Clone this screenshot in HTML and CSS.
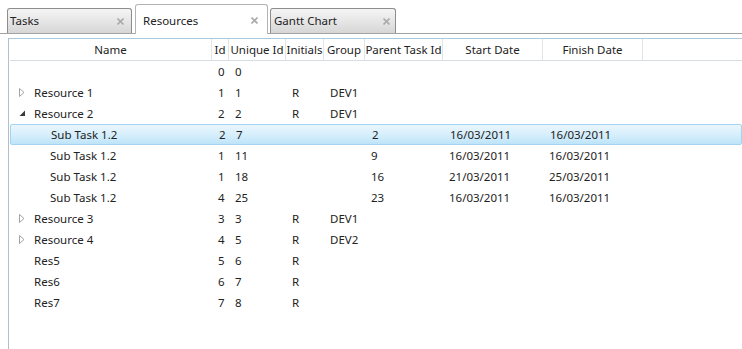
FILE: index.html
```html
<!DOCTYPE html>
<html lang="en">
<head>
  <meta charset="UTF-8">
  <title>Resources</title>
  <link rel="stylesheet" href="styles.css">
</head>
<body>
  <div class="tabs">
    <div class="tab">
      <span class="tab-title">Tasks</span>
      <svg class="close" width="7" height="7" viewBox="0 0 7 7"><path d="M0.5 0.5L6.5 6.5M6.5 0.5L0.5 6.5"/></svg>
    </div>
    <div class="tab active">
      <span class="tab-title">Resources</span>
      <svg class="close" width="7" height="7" viewBox="0 0 7 7"><path d="M0.5 0.5L6.5 6.5M6.5 0.5L0.5 6.5"/></svg>
    </div>
    <div class="tab gantt">
      <span class="tab-title">Gantt Chart</span>
      <svg class="close" width="7" height="7" viewBox="0 0 7 7"><path d="M0.5 0.5L6.5 6.5M6.5 0.5L0.5 6.5"/></svg>
    </div>
  </div>

  <div class="content">
    <div class="panel">
      <div class="row header">
        <div class="hcell">Name</div>
        <div class="hcell">Id</div>
        <div class="hcell">Unique Id</div>
        <div class="hcell">Initials</div>
        <div class="hcell">Group</div>
        <div class="hcell">Parent Task Id</div>
        <div class="hcell">Start Date</div>
        <div class="hcell">Finish Date</div>
        <div class="hcell filler"></div>
      </div>

      <div class="row">
        <div class="name"></div>
        <div class="cell">0</div><div class="cell">0</div><div class="cell"></div><div class="cell"></div>
        <div class="cell"></div><div class="cell"></div><div class="cell"></div>
      </div>
      <div class="row">
        <div class="name"><svg class="expander" width="6" height="9" viewBox="0 0 6 9"><path class="closed" d="M0.5 0.5L5 4.5L0.5 8.5Z"/></svg>Resource 1</div>
        <div class="cell">1</div><div class="cell">1</div><div class="cell">R</div><div class="cell">DEV1</div>
        <div class="cell"></div><div class="cell"></div><div class="cell"></div>
      </div>
      <div class="row">
        <div class="name"><svg class="expander" width="6" height="9" viewBox="0 0 6 9"><path class="open" d="M6 1.5L6 7L0.5 7Z"/></svg>Resource 2</div>
        <div class="cell">2</div><div class="cell">2</div><div class="cell">R</div><div class="cell">DEV1</div>
        <div class="cell"></div><div class="cell"></div><div class="cell"></div>
      </div>
      <div class="row selected">
        <div class="name child">Sub Task 1.2</div>
        <div class="cell">2</div><div class="cell">7</div><div class="cell"></div><div class="cell"></div>
        <div class="cell">2</div><div class="cell">16/03/2011</div><div class="cell">16/03/2011</div>
      </div>
      <div class="row">
        <div class="name child">Sub Task 1.2</div>
        <div class="cell">1</div><div class="cell">11</div><div class="cell"></div><div class="cell"></div>
        <div class="cell">9</div><div class="cell">16/03/2011</div><div class="cell">16/03/2011</div>
      </div>
      <div class="row">
        <div class="name child">Sub Task 1.2</div>
        <div class="cell">1</div><div class="cell">18</div><div class="cell"></div><div class="cell"></div>
        <div class="cell">16</div><div class="cell">21/03/2011</div><div class="cell">25/03/2011</div>
      </div>
      <div class="row">
        <div class="name child">Sub Task 1.2</div>
        <div class="cell">4</div><div class="cell">25</div><div class="cell"></div><div class="cell"></div>
        <div class="cell">23</div><div class="cell">16/03/2011</div><div class="cell">16/03/2011</div>
      </div>
      <div class="row">
        <div class="name"><svg class="expander" width="6" height="9" viewBox="0 0 6 9"><path class="closed" d="M0.5 0.5L5 4.5L0.5 8.5Z"/></svg>Resource 3</div>
        <div class="cell">3</div><div class="cell">3</div><div class="cell">R</div><div class="cell">DEV1</div>
        <div class="cell"></div><div class="cell"></div><div class="cell"></div>
      </div>
      <div class="row">
        <div class="name"><svg class="expander" width="6" height="9" viewBox="0 0 6 9"><path class="closed" d="M0.5 0.5L5 4.5L0.5 8.5Z"/></svg>Resource 4</div>
        <div class="cell">4</div><div class="cell">5</div><div class="cell">R</div><div class="cell">DEV2</div>
        <div class="cell"></div><div class="cell"></div><div class="cell"></div>
      </div>
      <div class="row">
        <div class="name leaf">Res5</div>
        <div class="cell">5</div><div class="cell">6</div><div class="cell">R</div><div class="cell"></div>
        <div class="cell"></div><div class="cell"></div><div class="cell"></div>
      </div>
      <div class="row">
        <div class="name leaf">Res6</div>
        <div class="cell">6</div><div class="cell">7</div><div class="cell">R</div><div class="cell"></div>
        <div class="cell"></div><div class="cell"></div><div class="cell"></div>
      </div>
      <div class="row">
        <div class="name leaf">Res7</div>
        <div class="cell">7</div><div class="cell">8</div><div class="cell">R</div><div class="cell"></div>
        <div class="cell"></div><div class="cell"></div><div class="cell"></div>
      </div>
    </div>
  </div>
</body>
</html>
```

FILE: styles.css
```css
body {
  margin: 0;
  height: 100vh;
  display: flex;
  flex-direction: column;
  overflow: hidden;
  font-family: "Noto Sans", "Open Sans", sans-serif;
  font-size: 11.5px;
  color: #222;
  background-color: #fff;
}

/* tab strip */
.tabs {
  display: flex;
  align-items: flex-end;
  height: 33px;
  padding-left: 7px;
  border-bottom: 1px solid #a3a3a3;
}
.tab {
  box-sizing: border-box;
  display: flex;
  align-items: center;
  width: 125px;
  height: 25px;
  padding: 0 7px 0 2px;
  border: 1px solid #8d8d8d;
  border-bottom: none;
  border-radius: 3px 3px 0 0;
  background: linear-gradient(#f5f5f5, #e6e6e6 50%, #d6d6d6);
}
.tab-title {
  flex: 1;
  padding-bottom: 1px;
}
.tab.active {
  width: 133px;
  height: 30px;
  margin-left: 3px;
  margin-bottom: -1px;
  padding: 2px 9px 0 7px;
  border-color: #b3b3b3;
  background: #fff;
}
.tab.gantt {
  width: 126px;
  margin-left: 2px;
  padding-left: 3px;
  padding-right: 5px;
}
.close path {
  stroke: #ababab;
  stroke-width: 1.6;
  fill: none;
}

/* grid panel */
.content {
  flex: 1;
  display: flex;
  padding: 4px 0 0 8px;
}
.panel {
  flex: 1;
  border-top: 1px solid #a6c9e0;
  border-left: 1px solid #b4bec8;
  padding-left: 1px;
}
.row {
  display: grid;
  grid-template-columns: 202px 17px 57px 38px 41px 78px 100px 100px 1fr;
  height: 21px;
  align-items: center;
  box-sizing: border-box;
}
.header {
  height: 22px;
  align-items: stretch;
  border-bottom: 1px solid #d8dde2;
}
.hcell {
  display: flex;
  align-items: center;
  justify-content: center;
  white-space: nowrap;
  overflow: hidden;
  border-right: 1px solid #e2e4e6;
}
.hcell.filler {
  border-right: none;
}
.cell {
  padding-left: 6px;
  white-space: nowrap;
}
.name {
  display: flex;
  align-items: center;
  padding-left: 9px;
  white-space: nowrap;
}
.name.leaf {
  padding-left: 24px;
}
.name.child {
  padding-left: 40px;
}
.expander {
  margin-right: 9px;
}
.expander .closed {
  fill: #fff;
  stroke: #a2a2a2;
  stroke-width: 1;
}
.expander .open {
  fill: #3a3a3a;
}
.selected {
  border: 1px solid #a3d4f2;
  border-radius: 2px;
  background: linear-gradient(#eaf6fd, #d7effc 50%, #bee4f8);
}
```
